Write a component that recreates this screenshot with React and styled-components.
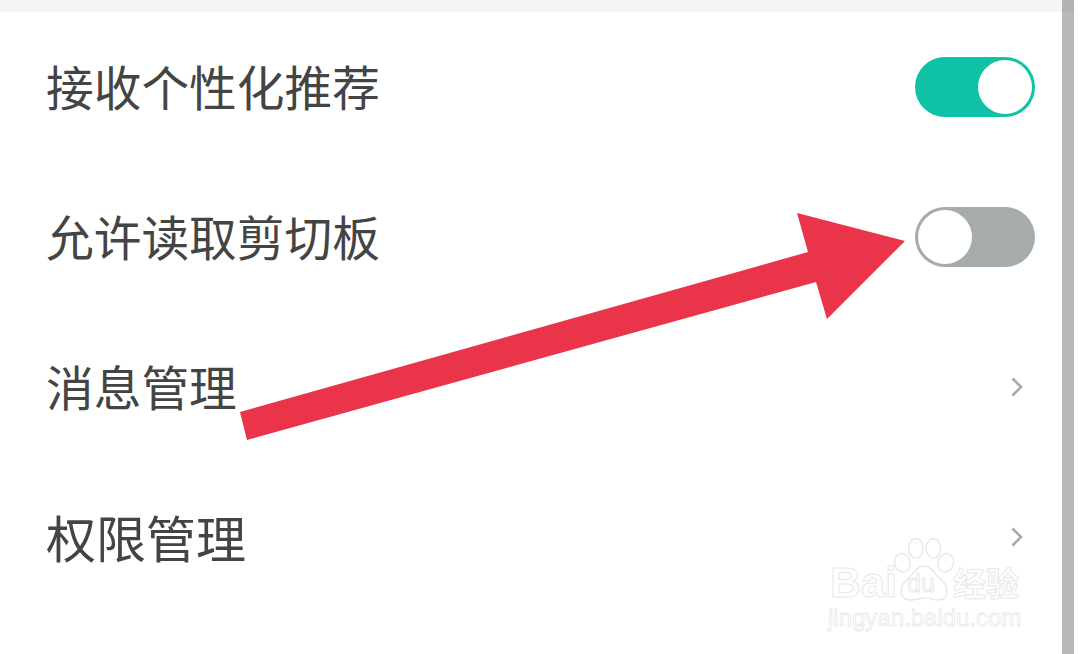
import React from "react";
import styled, { createGlobalStyle } from "styled-components";

const GlobalStyle = createGlobalStyle`
  html, body {
    margin: 0;
    padding: 0;
    background: #fff;
  }
`;

const settings = [
  { label: "接收个性化推荐", type: "toggle", on: true },
  { label: "允许读取剪切板", type: "toggle", on: false },
  { label: "消息管理", type: "link" },
  { label: "权限管理", type: "link", size: 50 },
];

const App = () => {
  return (
    <Page>
      <GlobalStyle />
      <Main>
        <TopStrip />
        <List>
          {settings.map((item) => (
            <Row key={item.label}>
              <Label $size={item.size}>{item.label}</Label>
              {item.type === "toggle" ? (
                <Toggle $on={item.on}>
                  <Knob />
                </Toggle>
              ) : (
                <Chevron viewBox="0 0 12 20">
                  <path d="M1.5 1.5 L10 10 L1.5 18.5" />
                </Chevron>
              )}
            </Row>
          ))}
        </List>
      </Main>
      <ScrollTrack>
        <ScrollCap />
      </ScrollTrack>
      <Arrow viewBox="0 0 1080 654">
        <polygon points="240,412 808,252 797,213 905,241 827,319 816,282 247,440" />
      </Arrow>
      <Watermark>
        <Paw viewBox="0 0 60 62">
          <g>
            <ellipse cx="10" cy="24" rx="7.5" ry="9" transform="rotate(-18 10 24)" />
            <ellipse cx="23" cy="10" rx="7" ry="9.5" />
            <ellipse cx="40" cy="10" rx="7" ry="9.5" />
            <ellipse cx="52" cy="24" rx="7.5" ry="9" transform="rotate(18 52 24)" />
            <path d="M31 27 C24 27 21 35 14 41 C6 48 7 60 18 60 C24 60 27 58 31 58 C36 58 39 60 45 60 C55 60 56 48 48 41 C41 35 38 27 31 27 Z" />
          </g>
        </Paw>
        <BrandRow>
          <BrandBai>Bai</BrandBai>
          <BrandDu>du</BrandDu>
          <BrandCn>经验</BrandCn>
        </BrandRow>
        <BrandUrl>jingyan.baidu.com</BrandUrl>
      </Watermark>
    </Page>
  );
};

const Page = styled.div`
  position: relative;
  display: flex;
  width: 1080px;
  height: 654px;
  overflow: hidden;
  background: #fff;
  font-family: "Noto Sans CJK SC", "Liberation Sans", sans-serif;
`;

const Main = styled.div`
  display: flex;
  flex-direction: column;
  width: 1062px;
`;

const TopStrip = styled.div`
  height: 12px;
  background: #f4f5f7;
`;

const List = styled.div`
  display: flex;
  flex-direction: column;
`;

const Row = styled.div`
  display: flex;
  align-items: center;
  justify-content: space-between;
  height: 150px;
  padding: 0 27px 0 46px;
`;

const Label = styled.div`
  padding-bottom: 3px;
  font-size: ${(p) => p.$size || 47.7}px;
  line-height: 1;
  color: #444;
`;

const Toggle = styled.div`
  display: flex;
  justify-content: ${(p) => (p.$on ? "flex-end" : "flex-start")};
  align-items: center;
  box-sizing: border-box;
  width: 120px;
  height: 60px;
  padding: 3px;
  border-radius: 30px;
  background: ${(p) => (p.$on ? "#0fc2a5" : "#a5acaa")};
`;

const Knob = styled.div`
  width: 54px;
  height: 54px;
  border-radius: 50%;
  background: #fff;
`;

const Chevron = styled.svg`
  width: 12px;
  height: 20px;
  margin-right: 12px;
  fill: none;
  stroke: #a6a9a9;
  stroke-width: 2.6;
`;

const ScrollTrack = styled.div`
  width: 12px;
  height: 654px;
  background: #b8b8b8;
`;

const ScrollCap = styled.div`
  height: 12px;
  background: #b1b2b2;
`;

const Arrow = styled.svg`
  position: absolute;
  left: 0;
  top: 0;
  width: 1080px;
  height: 654px;
  fill: #ea3449;
`;

const Watermark = styled.div`
  position: absolute;
  left: 828px;
  top: 538px;
  width: 196px;
  height: 96px;
`;

const Paw = styled.svg`
  position: absolute;
  left: 64px;
  top: 0;
  width: 62px;
  height: 64px;
  fill: #fff;
  stroke: #e8e8e8;
  stroke-width: 1.4;
`;

const BrandRow = styled.div`
  position: absolute;
  left: 2px;
  top: 22px;
  width: 192px;
  height: 44px;
  color: #fff;
  -webkit-text-stroke: 1px #e8e8e8;
`;

const BrandBai = styled.span`
  position: absolute;
  left: 0;
  top: 0;
  font-family: "Liberation Sans", sans-serif;
  font-size: 43px;
  font-weight: 700;
  line-height: 44px;
`;

const BrandDu = styled.span`
  position: absolute;
  left: 77px;
  top: 9px;
  font-family: "Liberation Sans", sans-serif;
  font-size: 25px;
  line-height: 28px;
`;

const BrandCn = styled.span`
  position: absolute;
  left: 123px;
  top: 2px;
  font-size: 33px;
  font-weight: 700;
  line-height: 40px;
  white-space: nowrap;
`;

const BrandUrl = styled.div`
  position: absolute;
  left: 0;
  top: 67px;
  font-family: "Liberation Sans", sans-serif;
  font-size: 24px;
  line-height: 26px;
  white-space: nowrap;
  color: #fff;
  -webkit-text-stroke: 0.8px #e8e8e8;
`;

export default App;
